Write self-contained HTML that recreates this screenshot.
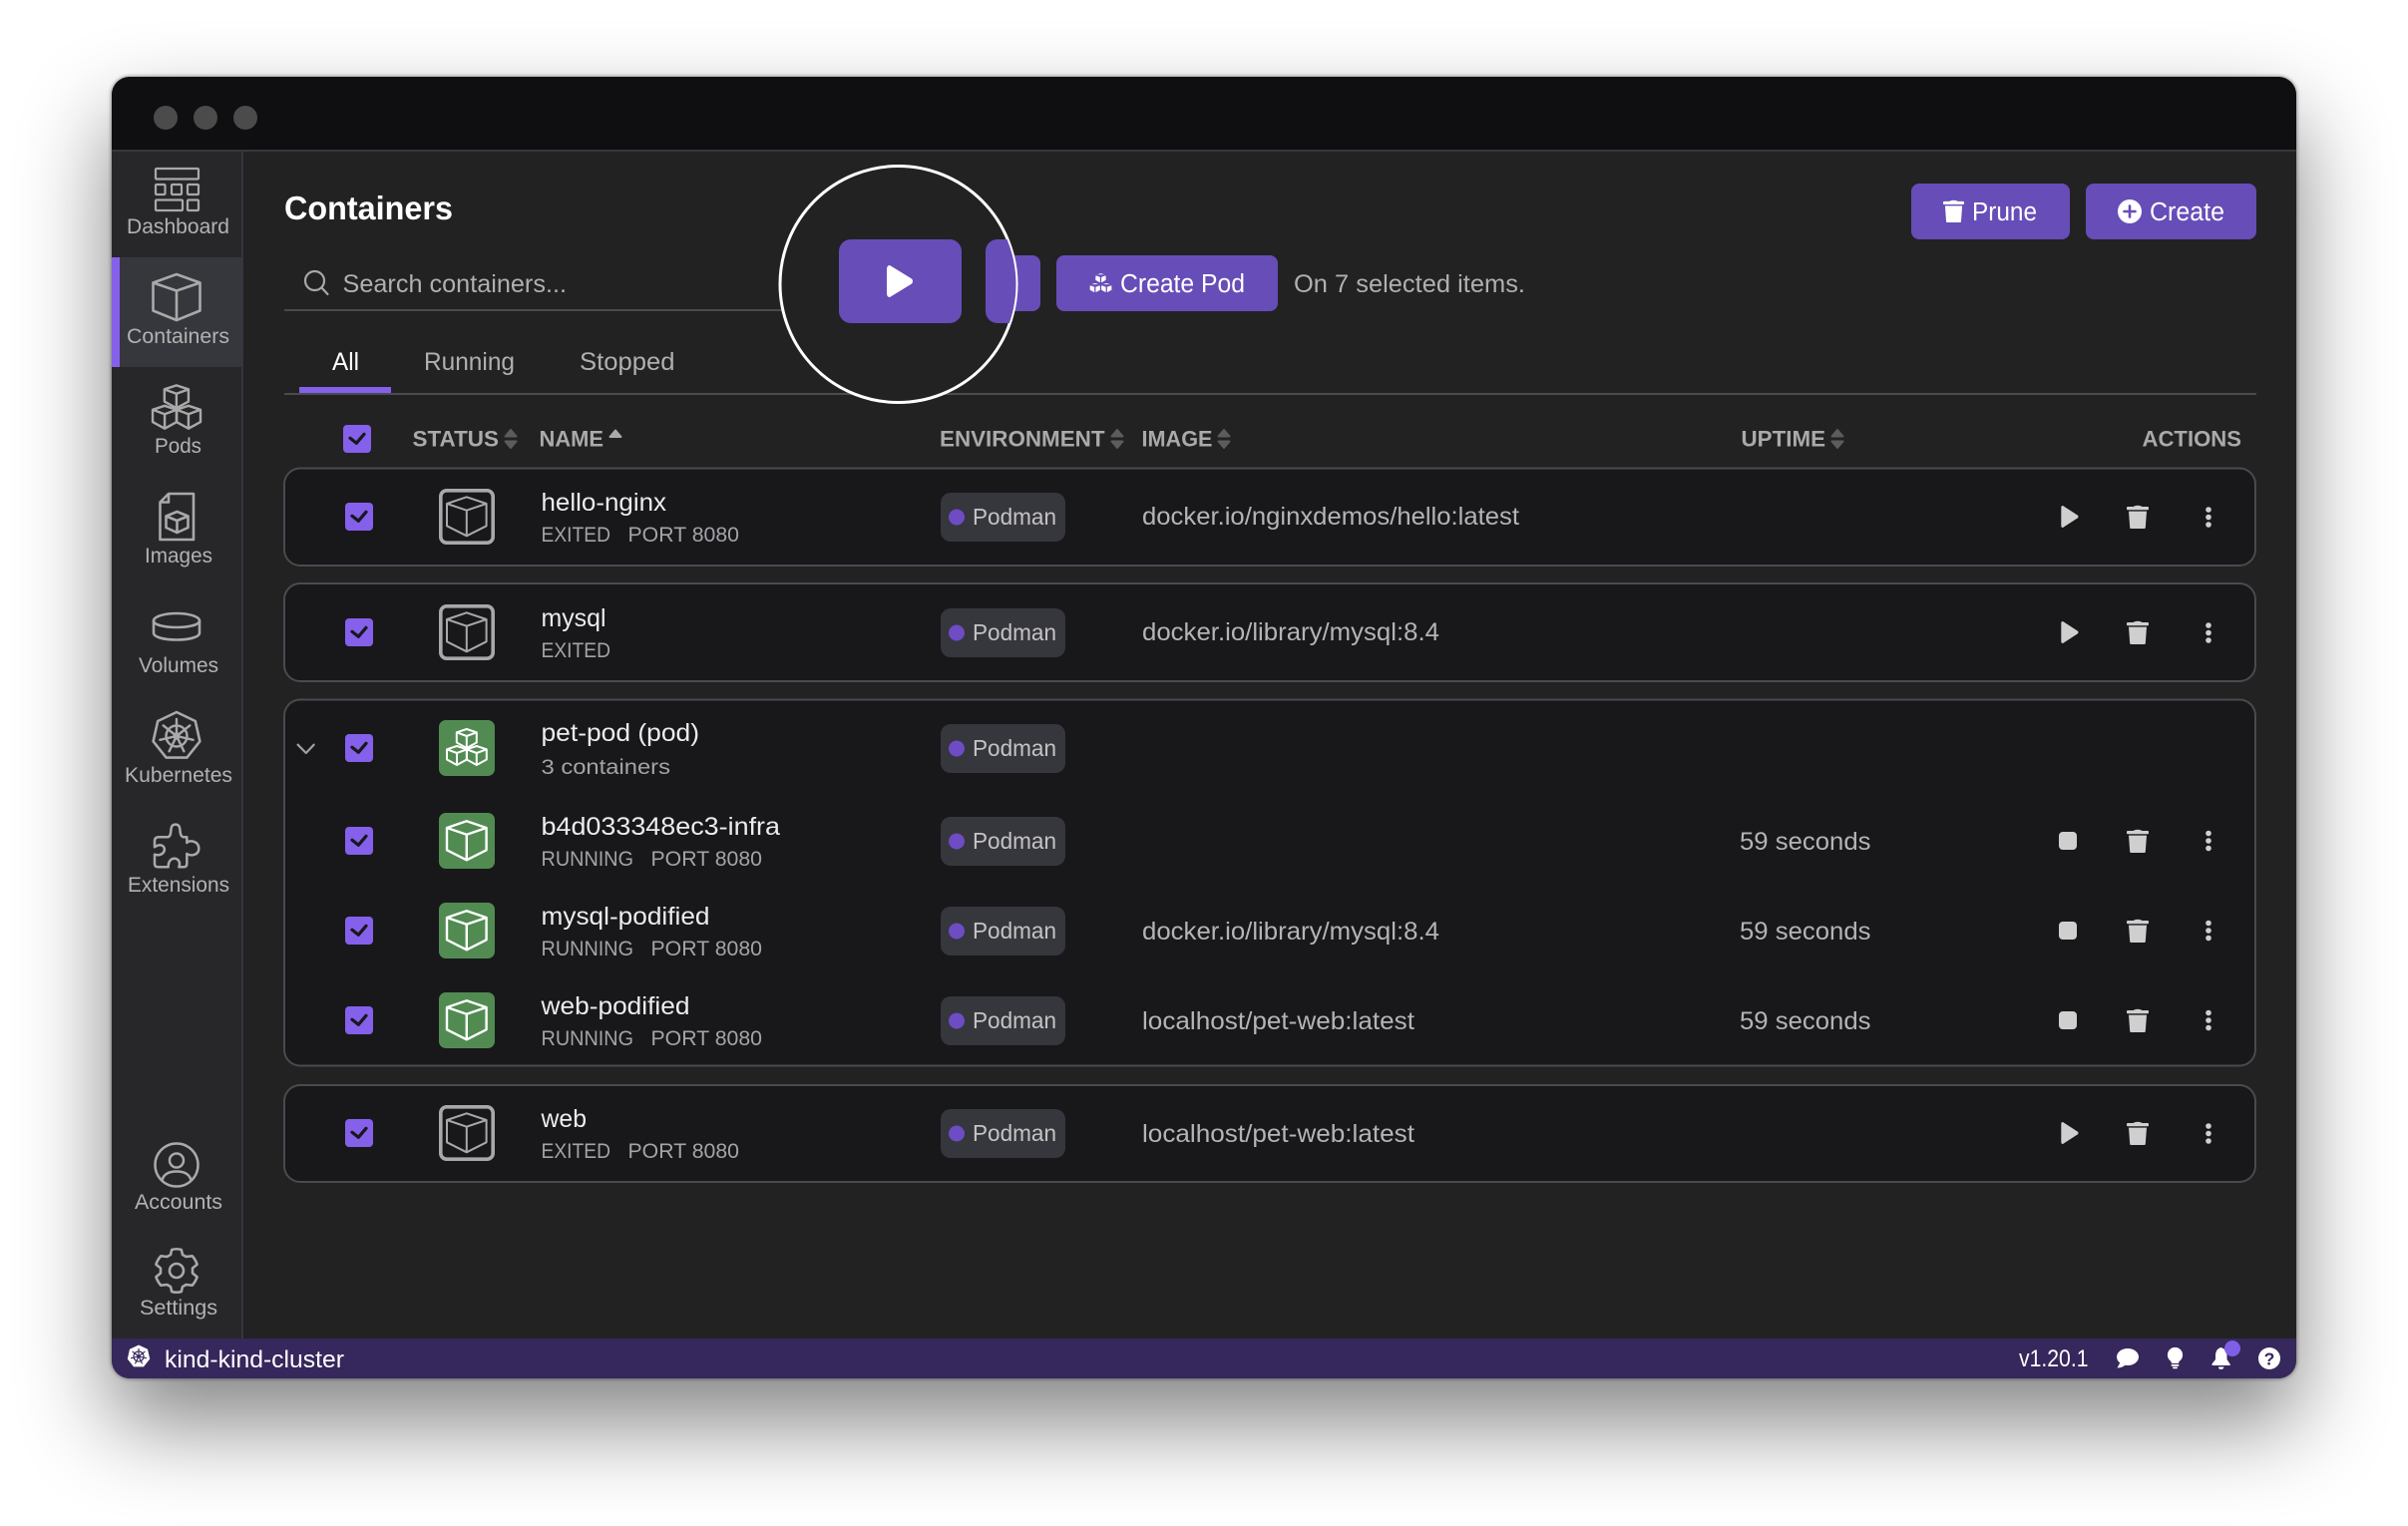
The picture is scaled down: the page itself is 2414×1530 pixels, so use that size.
<!DOCTYPE html>
<html lang="en"><head><meta charset="utf-8"><title>Containers</title>
<style>
html,body{margin:0;padding:0;background:#fff;width:2414px;height:1530px;overflow:hidden}
#sh{position:absolute;left:112px;top:77px;width:2190px;height:1305px;border-radius:18px;box-shadow:0 44px 90px 2px rgba(0,0,0,.48),0 0 3px 1px rgba(0,0,0,.35)}
svg{position:absolute;left:0;top:0}
text{font-family:"Liberation Sans",sans-serif}
.lb{font-size:21px;fill:#b2b2b2}
.nm{font-size:25px;fill:#ececec}
.sb{font-size:21.5px;fill:#a3a3a8}
.hd{font-size:22px;font-weight:700;fill:#aaaaaa}
.ch{font-size:23.5px;fill:#c4c4c4}
.im{font-size:25px;fill:#b4b4b4}
.up{font-size:25px;fill:#b4b4b4}
.bt{font-size:25.5px;fill:#fff}
.st{font-size:24px;fill:#fff}
.tb{font-size:25px;fill:#b0b0b0}
</style></head><body>
<div id="sh"></div>
<svg width="2414" height="1530" viewBox="0 0 2414 1530" xmlns="http://www.w3.org/2000/svg">
<defs>
<clipPath id="win"><rect x="112" y="77" width="2190" height="1305" rx="18"/></clipPath>
<clipPath id="spot"><circle cx="900.5" cy="285" r="118"/></clipPath>
<path id="c" d="M10 0 20 3.3V13.5L10 19 0 13.5V3.3ZM0 3.3 10 7 20 3.3M10 7V19"/>
<g id="pod3"><use href="#c" x="17.8" y="9"/><use href="#c" x="8" y="26"/><use href="#c" x="27.8" y="26"/></g>
<path id="cube" d="M27.8 8.3 47.6 15V37.3L27.8 47.3 8 37.3V15ZM8 15 27.8 21.7 47.6 15M27.8 21.7V47.3"/>
<g id="iex"><rect x="1.8" y="1.8" width="52.4" height="52.4" rx="6" fill="none" stroke="#a8a8a8" stroke-width="3.6"/><use href="#cube" fill="none" stroke="#a8a8a8" stroke-width="2" stroke-linejoin="round"/></g>
<g id="igr"><rect width="56" height="56" rx="7" fill="#518b52"/><use href="#cube" fill="none" stroke="#fff" stroke-width="2.4" stroke-linejoin="round"/></g>
<g id="cb"><rect width="28" height="28" rx="4" fill="#8560ea"/><path d="M7 13.3 13.3 18.3 21 9.3" fill="none" stroke="#18181b" stroke-width="3.2" stroke-linecap="round" stroke-linejoin="round"/></g>
<g id="chip"><rect width="125" height="49" rx="10" fill="#36363d"/><circle cx="16" cy="24.5" r="8" fill="#6d4cc4"/></g>
<g id="trash"><path d="M7 1.6Q11 0 15 1.6V2.5H7Z"/><rect y="2" width="22" height="3.2" rx="1"/><path d="M2 6.6H20L18.8 23Q18.7 24 17.7 24H4.3Q3.3 24 3.2 23Z"/></g>
<g id="dots"><circle cy="-7.5" r="2.8"/><circle r="2.8"/><circle cy="7.5" r="2.8"/></g>
<path id="play" d="M2 0Q.3 0 .3 2V20Q.3 22 2 22L17 12.2Q18 11 17 9.8Z"/>
<g id="sort"><path d="M1.5 7.5 7 1 12.5 7.5Z M1.5 12.5 7 19 12.5 12.5Z" fill="#5c5c5c" stroke="#5c5c5c" stroke-width="2" stroke-linejoin="round"/></g>
<path id="hept" d="M0-24 18.8-15 23.4 5.3 10.4 21.6H-10.4L-23.4 5.3-18.8-15Z"/>
<g id="wheel" fill="none"><circle r="10.5"/><path d="M0 0V-17M0 0 13.3-10.6M0 0 16.6 3.8M0 0 7.4 15.3M0 0-7.4 15.3M0 0-16.6 3.8M0 0-13.3-10.6"/><circle r="2.5"/></g>
</defs>

<g clip-path="url(#win)">
<rect x="112" y="77" width="2190" height="1305" fill="#222222"/>
<rect x="112" y="77" width="2190" height="73" fill="#0f0f11"/>
<rect x="112" y="150" width="2190" height="2" fill="#36363d"/>
<circle cx="166" cy="118" r="12" fill="#4b4b4b"/><circle cx="206" cy="118" r="12" fill="#4b4b4b"/><circle cx="246" cy="118" r="12" fill="#4b4b4b"/>
<rect x="112" y="152" width="130" height="1190" fill="#27272a"/>
<rect x="242" y="152" width="2" height="1190" fill="#36363d"/>
<rect x="112" y="258" width="132" height="110" fill="#36363d"/>
<rect x="112" y="258" width="8" height="110" fill="#8560ea"/>
<rect x="112" y="1342" width="2190" height="40" fill="#36275c"/>
</g>

<!-- sidebar icons -->
<g fill="none" stroke="#a9a9a9" stroke-width="2.2" stroke-linejoin="round" stroke-linecap="round">
<rect x="156" y="169" width="43" height="10.5" rx="1"/>
<rect x="156" y="185" width="9.5" height="10" rx="1"/><rect x="172" y="185" width="10" height="10" rx="1"/><rect x="188" y="185" width="11" height="10" rx="1"/>
<rect x="156" y="200.5" width="27" height="10.5" rx="1"/><rect x="188" y="200.5" width="11" height="10.5" rx="1"/>
<path stroke-width="2.6" d="M177 275 200.5 283.5V311.500L177 321 153.500 311.500V283.500ZM153.500 283.500 177 291.500 200.500 283.500M177 291.500V321"/>
<g transform="translate(143.400 375.500) scale(1.205)" stroke-width="2"><use href="#pod3"/></g>
<path stroke-width="2.6" d="M169 495H194V541H160.500V503.500ZM169 495V503.500H160.500"/>
<path stroke-width="2.6" d="M177.500 513 188.500 517.500V529L177.500 534 166.500 529V517.500ZM166.500 517.500 177.500 522 188.500 517.500M177.500 522V534"/>
<path stroke-width="2.6" d="M154 622.500C154 618 165 615 177 615S200 618 200 622.500V634.500C200 639 189 641.500 177 641.500S154 639 154 634.500Z"/>
<path stroke-width="2.6" d="M154 622.500C154 626.500 165 629 177 629S200 626.500 200 622.500"/>
<g transform="translate(177 738)"><use href="#hept" stroke-width="2.6"/><g stroke-width="2.4"><use href="#wheel"/></g></g>
<g transform="translate(100 480) scale(.3333)" stroke-width="7.500">
<path d="M205 1078C222 1072 205 1040 228 1040C250 1040 234 1072 251 1078H262V1095C270 1085 298 1090 298 1112C298 1135 270 1135 262 1128V1158Q262 1168 252 1168H238C250 1140 206 1128 206 1168H176Q165 1168 165 1158V1130C195 1140 205 1105 182 1102C175 1101 170 1105 165 1108V1090Q165 1078 178 1078Z"/>
</g>
<circle cx="177" cy="1168" r="21.500" stroke-width="2.500"/><circle cx="177" cy="1163.500" r="7" stroke-width="2.500"/>
<path stroke-width="2.500" d="M162.500 1183.500C164 1177 169 1174.500 177 1174.500S190 1177 191.500 1183.500"/>
<g transform="translate(177 1274)" stroke-width="2.600">
<path d="M-4.800-21Q0-22.500 4.800-21L6-16Q8-15 9.500-14L15.700-14.700Q19-11 20.600-6.300L16-2.500V2.500L20.600 6.300Q19 11 15.700 14.700L9.500 14Q8 15 6 16L4.800 21Q0 22.500-4.800 21L-6 16Q-8 15-9.500 14L-15.700 14.700Q-19 11-20.600 6.300L-16 2.500V-2.500L-20.600-6.300Q-19-11-15.700-14.700L-9.500-14Q-8-15-6-16Z"/>
<circle r="7"/></g>
</g>
<text class="lb" x="127" y="234" textLength="103" lengthAdjust="spacingAndGlyphs">Dashboard</text>
<text class="lb" x="127" y="344" textLength="103" lengthAdjust="spacingAndGlyphs">Containers</text>
<text class="lb" x="155" y="454" textLength="47" lengthAdjust="spacingAndGlyphs">Pods</text>
<text class="lb" x="145" y="564" textLength="68" lengthAdjust="spacingAndGlyphs">Images</text>
<text class="lb" x="139" y="674" textLength="80" lengthAdjust="spacingAndGlyphs">Volumes</text>
<text class="lb" x="125" y="784" textLength="108" lengthAdjust="spacingAndGlyphs">Kubernetes</text>
<text class="lb" x="128" y="894" textLength="102" lengthAdjust="spacingAndGlyphs">Extensions</text>
<text class="lb" x="135" y="1212" textLength="88" lengthAdjust="spacingAndGlyphs">Accounts</text>
<text class="lb" x="140" y="1318" textLength="78" lengthAdjust="spacingAndGlyphs">Settings</text>

<!-- header -->
<text x="285" y="220" font-size="33" font-weight="700" fill="#fff" textLength="169" lengthAdjust="spacingAndGlyphs">Containers</text>
<circle cx="315.500" cy="281.500" r="9.500" fill="none" stroke="#a8a8a8" stroke-width="2.200"/>
<path d="M322.500 288.500 328.500 295" stroke="#a8a8a8" stroke-width="2.200" stroke-linecap="round"/>
<text class="tb" x="343.500" y="293" fill="#a6a6a6" textLength="224.500" lengthAdjust="spacingAndGlyphs">Search containers...</text>
<rect x="285" y="310" width="505" height="2" fill="#4a4a4f"/>

<text class="tb" x="333" y="371" style="fill:#fff" textLength="27" lengthAdjust="spacingAndGlyphs">All</text>
<text class="tb" x="425" y="371" textLength="91" lengthAdjust="spacingAndGlyphs">Running</text>
<text class="tb" x="581" y="371" textLength="95.500" lengthAdjust="spacingAndGlyphs">Stopped</text>
<rect x="285" y="394" width="1977" height="2" fill="#4a4a4f"/>
<rect x="300" y="388" width="92" height="6" fill="#8560ea"/>

<!-- top right buttons -->
<rect x="1916" y="184" width="159" height="56" rx="8" fill="#674db8"/>
<rect x="2091" y="184" width="171" height="56" rx="8" fill="#674db8"/>
<g transform="translate(1948 200)" fill="#fff"><use href="#trash" transform="scale(.955 .96)"/></g>
<text class="bt" x="1977" y="221" textLength="65" lengthAdjust="spacingAndGlyphs">Prune</text>
<circle cx="2135" cy="212" r="12" fill="#fff"/><path d="M2135 206.500V217.500M2129.500 212H2140.500" stroke="#674db8" stroke-width="2.600" stroke-linecap="round"/>
<text class="bt" x="2155" y="221" textLength="75" lengthAdjust="spacingAndGlyphs">Create</text>

<!-- bulk actions -->
<rect x="985" y="256" width="58" height="56" rx="8" fill="#674db8"/>
<rect x="1059" y="256" width="222" height="56" rx="8" fill="#674db8"/>
<g transform="translate(1087.400 268.200) scale(.578)" fill="#fff" stroke="#674db8" stroke-width="2.200" stroke-linejoin="round"><use href="#pod3"/></g>
<text class="bt" x="1123" y="293" textLength="125" lengthAdjust="spacingAndGlyphs">Create Pod</text>
<text class="tb" x="1297" y="293" fill="#a8a8a8" textLength="232" lengthAdjust="spacingAndGlyphs">On 7 selected items.</text>

<!-- spotlight -->
<circle cx="900.500" cy="285" r="118.500" fill="#222222" stroke="#fff" stroke-width="3"/>
<g clip-path="url(#spot)">
<rect x="841" y="240" width="123" height="84" rx="12" fill="#674db8"/>
<rect x="988" y="240" width="80" height="84" rx="12" fill="#674db8"/>
<path d="M892 266Q889 266 889 270V294Q889 298 892 298L914 284.500Q916 282 914 279.500Z" fill="#fff"/>
</g>

<!-- table head -->
<use href="#cb" x="344" y="426"/>
<text class="hd" x="413.500" y="447.500" textLength="86.500" lengthAdjust="spacingAndGlyphs">STATUS</text><use href="#sort" x="505" y="430"/>
<text class="hd" x="540.500" y="447.500" textLength="64.500" lengthAdjust="spacingAndGlyphs">NAME</text>
<path d="M611.500 438 617 431.500 622.500 438Z" fill="#aaa" stroke="#aaa" stroke-width="2" stroke-linejoin="round"/>
<text class="hd" x="942" y="447.500" textLength="165.500" lengthAdjust="spacingAndGlyphs">ENVIRONMENT</text><use href="#sort" x="1113" y="430"/>
<text class="hd" x="1144.500" y="447.500" textLength="71" lengthAdjust="spacingAndGlyphs">IMAGE</text><use href="#sort" x="1220" y="430"/>
<text class="hd" x="1745.500" y="447.500" textLength="84.500" lengthAdjust="spacingAndGlyphs">UPTIME</text><use href="#sort" x="1835" y="430"/>
<text class="hd" x="2147.500" y="447.500" textLength="99.500" lengthAdjust="spacingAndGlyphs">ACTIONS</text>

<!-- row containers -->
<g fill="#18181b" stroke="#4a4a4f" stroke-width="2">
<rect x="285" y="469.500" width="1976" height="97.500" rx="16"/>
<rect x="285" y="585" width="1976" height="98" rx="16"/>
<rect x="285" y="701.500" width="1976" height="367" rx="16"/>
<rect x="285" y="1088" width="1976" height="97" rx="16"/>
</g>

<!-- checkboxes -->
<use href="#cb" x="346" y="504"/><use href="#cb" x="346" y="620"/><use href="#cb" x="346" y="736"/><use href="#cb" x="346" y="829"/><use href="#cb" x="346" y="919"/><use href="#cb" x="346" y="1009"/><use href="#cb" x="346" y="1122"/>
<path d="M298.600 746.700 306.800 755 314.600 746.700" fill="none" stroke="#a0a0a0" stroke-width="2.200" stroke-linecap="round" stroke-linejoin="round"/>

<!-- status icons -->
<use href="#iex" x="440" y="490"/><use href="#iex" x="440" y="606"/>
<g transform="translate(440 722)"><rect width="56" height="56" rx="7" fill="#518b52"/><use href="#pod3" fill="none" stroke="#fff" stroke-width="2" stroke-linejoin="round"/></g>
<use href="#igr" x="440" y="815"/><use href="#igr" x="440" y="905"/><use href="#igr" x="440" y="995"/>
<use href="#iex" x="440" y="1108"/>

<!-- names -->
<text class="nm" x="542.500" y="512" textLength="125.500" lengthAdjust="spacingAndGlyphs">hello-nginx</text>
<text class="sb" x="542.500" y="543" textLength="69.500" lengthAdjust="spacingAndGlyphs">EXITED</text><text class="sb" x="629.500" y="543" textLength="111.500" lengthAdjust="spacingAndGlyphs">PORT 8080</text>
<text class="nm" x="542.500" y="628" textLength="65" lengthAdjust="spacingAndGlyphs">mysql</text>
<text class="sb" x="542.500" y="659" textLength="69.500" lengthAdjust="spacingAndGlyphs">EXITED</text>
<text class="nm" x="542.500" y="743" textLength="158.500" lengthAdjust="spacingAndGlyphs">pet-pod (pod)</text>
<text class="sb" x="542.500" y="776" textLength="129.500" lengthAdjust="spacingAndGlyphs">3 containers</text>
<text class="nm" x="542.500" y="837" textLength="239.500" lengthAdjust="spacingAndGlyphs">b4d033348ec3-infra</text>
<text class="sb" x="542.500" y="868" textLength="92.500" lengthAdjust="spacingAndGlyphs">RUNNING</text><text class="sb" x="652.500" y="868" textLength="111.500" lengthAdjust="spacingAndGlyphs">PORT 8080</text>
<text class="nm" x="542.500" y="927" textLength="169" lengthAdjust="spacingAndGlyphs">mysql-podified</text>
<text class="sb" x="542.500" y="958" textLength="92.500" lengthAdjust="spacingAndGlyphs">RUNNING</text><text class="sb" x="652.500" y="958" textLength="111.500" lengthAdjust="spacingAndGlyphs">PORT 8080</text>
<text class="nm" x="542.500" y="1017" textLength="149" lengthAdjust="spacingAndGlyphs">web-podified</text>
<text class="sb" x="542.500" y="1048" textLength="92.500" lengthAdjust="spacingAndGlyphs">RUNNING</text><text class="sb" x="652.500" y="1048" textLength="111.500" lengthAdjust="spacingAndGlyphs">PORT 8080</text>
<text class="nm" x="542.500" y="1130" textLength="45.500" lengthAdjust="spacingAndGlyphs">web</text>
<text class="sb" x="542.500" y="1161" textLength="69.500" lengthAdjust="spacingAndGlyphs">EXITED</text><text class="sb" x="629.500" y="1161" textLength="111.500" lengthAdjust="spacingAndGlyphs">PORT 8080</text>

<!-- chips -->
<use href="#chip" x="943" y="494"/><text class="ch" x="975" y="526" textLength="84" lengthAdjust="spacingAndGlyphs">Podman</text>
<use href="#chip" x="943" y="610"/><text class="ch" x="975" y="642" textLength="84" lengthAdjust="spacingAndGlyphs">Podman</text>
<use href="#chip" x="943" y="726"/><text class="ch" x="975" y="758" textLength="84" lengthAdjust="spacingAndGlyphs">Podman</text>
<use href="#chip" x="943" y="819"/><text class="ch" x="975" y="851" textLength="84" lengthAdjust="spacingAndGlyphs">Podman</text>
<use href="#chip" x="943" y="909"/><text class="ch" x="975" y="941" textLength="84" lengthAdjust="spacingAndGlyphs">Podman</text>
<use href="#chip" x="943" y="999"/><text class="ch" x="975" y="1031" textLength="84" lengthAdjust="spacingAndGlyphs">Podman</text>
<use href="#chip" x="943" y="1112"/><text class="ch" x="975" y="1144" textLength="84" lengthAdjust="spacingAndGlyphs">Podman</text>

<!-- images -->
<text class="im" x="1145" y="526" textLength="378" lengthAdjust="spacingAndGlyphs">docker.io/nginxdemos/hello:latest</text>
<text class="im" x="1145" y="642" textLength="298" lengthAdjust="spacingAndGlyphs">docker.io/library/mysql:8.4</text>
<text class="im" x="1145" y="942" textLength="298" lengthAdjust="spacingAndGlyphs">docker.io/library/mysql:8.4</text>
<text class="im" x="1145" y="1032" textLength="273" lengthAdjust="spacingAndGlyphs">localhost/pet-web:latest</text>
<text class="im" x="1145" y="1145" textLength="273" lengthAdjust="spacingAndGlyphs">localhost/pet-web:latest</text>

<!-- uptime -->
<text class="up" x="1744" y="852" textLength="131.500" lengthAdjust="spacingAndGlyphs">59 seconds</text>
<text class="up" x="1744" y="942" textLength="131.500" lengthAdjust="spacingAndGlyphs">59 seconds</text>
<text class="up" x="1744" y="1032" textLength="131.500" lengthAdjust="spacingAndGlyphs">59 seconds</text>

<!-- actions -->
<g fill="#cfcfcf">
<use href="#play" x="2066" y="507"/><use href="#trash" x="2132" y="506"/><use href="#dots" x="2214" y="518.500"/>
<use href="#play" x="2066" y="623"/><use href="#trash" x="2132" y="622"/><use href="#dots" x="2214" y="634.500"/>
<rect x="2064" y="834" width="18" height="18" rx="4"/><use href="#trash" x="2132" y="831"/><use href="#dots" x="2214" y="843"/>
<rect x="2064" y="924" width="18" height="18" rx="4"/><use href="#trash" x="2132" y="921"/><use href="#dots" x="2214" y="933"/>
<rect x="2064" y="1014" width="18" height="18" rx="4"/><use href="#trash" x="2132" y="1011"/><use href="#dots" x="2214" y="1023"/>
<use href="#play" x="2066" y="1125"/><use href="#trash" x="2132" y="1124"/><use href="#dots" x="2214" y="1136.500"/>
</g>

<!-- status bar -->
<g transform="translate(139 1360) scale(.48)"><use href="#hept" fill="#fff"/><g stroke="#36275c" stroke-width="2.400"><use href="#wheel"/></g></g>
<text class="st" x="165" y="1371" textLength="180" lengthAdjust="spacingAndGlyphs">kind-kind-cluster</text>
<text class="st" x="2024" y="1370" textLength="69.500" lengthAdjust="spacingAndGlyphs">v1.20.1</text>
<g fill="#fff">
<ellipse cx="2133" cy="1360.500" rx="11" ry="8.500"/><path d="M2126 1365 2122.500 1371.500Q2128 1371.500 2131 1368Z"/>
<circle cx="2180.500" cy="1358.500" r="7.600"/><path d="M2175.500 1362H2185.500L2184 1367H2177Z"/><rect x="2176.500" y="1368" width="8" height="1.800" rx=".9"/><rect x="2178" y="1370.500" width="5" height="1.800" rx=".9"/>
<path d="M2226.500 1351Q2221 1352.500 2221 1359.500V1363L2217.500 1367.500Q2217 1369 2218.500 1369H2235Q2236.500 1369 2235.500 1367.500L2232.500 1363V1359.500Q2232 1352.500 2226.500 1351Z"/><path d="M2224 1370.500H2229.500Q2229 1373 2226.500 1373T2224 1370.500Z"/>
<circle cx="2275" cy="1362" r="11"/>
</g>
<circle cx="2238" cy="1352" r="8" fill="#7e5fe5"/>
<text x="2275" y="1368.500" text-anchor="middle" font-size="17.500" font-weight="700" fill="#36275c">?</text>
</svg>
</body></html>
